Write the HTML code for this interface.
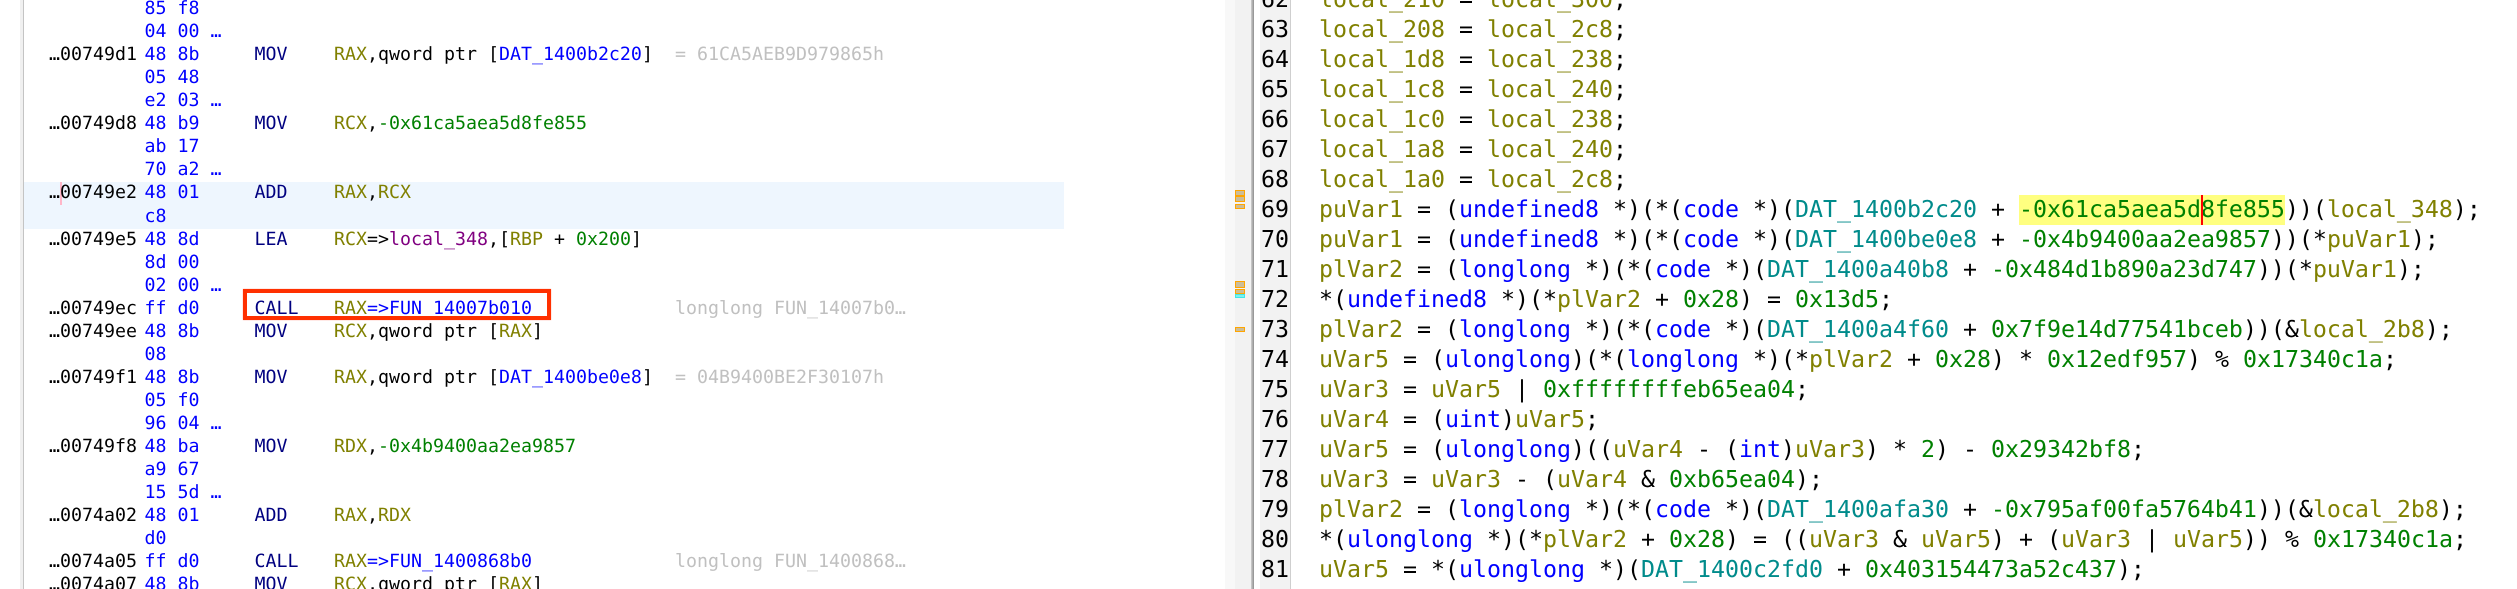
<!DOCTYPE html>
<html><head><meta charset="utf-8">
<style>
html,body{margin:0;padding:0;background:#fff}
#p{position:relative;width:2517px;height:589px;overflow:hidden;background:#fff;font-family:"DejaVu Sans Mono","Liberation Mono",monospace;text-rendering:geometricPrecision}
.abs{position:absolute}
#L{position:absolute;left:0;top:0;width:1225px;height:589px;font-size:18.27px;line-height:23px;filter:blur(.3px)}
#L div{position:absolute;left:0;width:1200px;height:23px}
#L span{white-space:pre}
#L div>span{position:absolute;top:0}
.a{left:49px;color:#000}
.b{left:144.5px;color:#00f}
.m{left:254.5px;color:#000080}
.o{left:334px;color:#000}
.g{left:675px;color:#c0c0c0}
#R{position:absolute;left:0;top:0;width:2517px;height:589px;font-size:23.25px;line-height:30px;filter:blur(.3px)}
#R div{position:absolute;height:30px;white-space:pre}
#R .n{left:1261px;color:#000}
#R .c{left:1319px;color:#000}
i{font-style:normal}
.r{color:#808000}.k{color:#00f}.h{color:#008000}.p{color:#800080}.t{color:#008b8b}
.mk{position:absolute;left:1235px;width:10px;box-sizing:border-box;border:1px solid #ffa500;background:#cdbd98}
</style></head><body><div id="p">

<div class="abs" style="left:20px;top:0;width:3px;height:589px;background:#f0f0f0"></div>
<div class="abs" style="left:23px;top:0;width:1px;height:589px;background:#c4c4c4"></div>
<div class="abs" style="left:24px;top:182px;width:1040px;height:47px;background:#eef6fe"></div>
<div class="abs" style="left:60px;top:182px;width:2px;height:23px;background:#ffb6c8"></div>

<div id="L">
<div style="top:-2.8px"><span class="b">85 f8</span></div>
<div style="top:20.2px"><span class="b">04 00 …</span></div>
<div style="top:43.3px"><span class="a">…00749d1</span><span class="b">48 8b</span><span class="m">MOV</span><span class="o"><i class="r">RAX</i>,qword ptr [<i class="k">DAT_1400b2c20</i>]</span><span class="g">= 61CA5AEB9D979865h</span></div>
<div style="top:66.3px"><span class="b">05 48</span></div>
<div style="top:89.3px"><span class="b">e2 03 …</span></div>
<div style="top:112.4px"><span class="a">…00749d8</span><span class="b">48 b9</span><span class="m">MOV</span><span class="o"><i class="r">RCX</i>,<i class="h">-0x61ca5aea5d8fe855</i></span></div>
<div style="top:135.4px"><span class="b">ab 17</span></div>
<div style="top:158.4px"><span class="b">70 a2 …</span></div>
<div style="top:181.4px"><span class="a">…00749e2</span><span class="b">48 01</span><span class="m">ADD</span><span class="o"><i class="r">RAX</i>,<i class="r">RCX</i></span></div>
<div style="top:204.5px"><span class="b">c8</span></div>
<div style="top:227.5px"><span class="a">…00749e5</span><span class="b">48 8d</span><span class="m">LEA</span><span class="o"><i class="r">RCX</i>=&gt;<i class="p">local_348</i>,[<i class="r">RBP</i> + <i class="h">0x200</i>]</span></div>
<div style="top:250.5px"><span class="b">8d 00</span></div>
<div style="top:273.6px"><span class="b">02 00 …</span></div>
<div style="top:296.6px"><span class="a">…00749ec</span><span class="b">ff d0</span><span class="m">CALL</span><span class="o"><i class="r">RAX</i><i class="k">=&gt;FUN_14007b010</i></span><span class="g">longlong FUN_14007b0…</span></div>
<div style="top:319.6px"><span class="a">…00749ee</span><span class="b">48 8b</span><span class="m">MOV</span><span class="o"><i class="r">RCX</i>,qword ptr [<i class="r">RAX</i>]</span></div>
<div style="top:342.7px"><span class="b">08</span></div>
<div style="top:365.7px"><span class="a">…00749f1</span><span class="b">48 8b</span><span class="m">MOV</span><span class="o"><i class="r">RAX</i>,qword ptr [<i class="k">DAT_1400be0e8</i>]</span><span class="g">= 04B9400BE2F30107h</span></div>
<div style="top:388.7px"><span class="b">05 f0</span></div>
<div style="top:411.7px"><span class="b">96 04 …</span></div>
<div style="top:434.8px"><span class="a">…00749f8</span><span class="b">48 ba</span><span class="m">MOV</span><span class="o"><i class="r">RDX</i>,<i class="h">-0x4b9400aa2ea9857</i></span></div>
<div style="top:457.8px"><span class="b">a9 67</span></div>
<div style="top:480.8px"><span class="b">15 5d …</span></div>
<div style="top:503.9px"><span class="a">…0074a02</span><span class="b">48 01</span><span class="m">ADD</span><span class="o"><i class="r">RAX</i>,<i class="r">RDX</i></span></div>
<div style="top:526.9px"><span class="b">d0</span></div>
<div style="top:549.9px"><span class="a">…0074a05</span><span class="b">ff d0</span><span class="m">CALL</span><span class="o"><i class="r">RAX</i><i class="k">=&gt;FUN_1400868b0</i></span><span class="g">longlong FUN_1400868…</span></div>
<div style="top:573px"><span class="a">…0074a07</span><span class="b">48 8b</span><span class="m">MOV</span><span class="o"><i class="r">RCX</i>,qword ptr [<i class="r">RAX</i>]</span></div>
</div>

<div class="abs" style="left:243px;top:289px;width:308px;height:31px;box-sizing:border-box;border:4px solid #ff3000;box-shadow:0 0 1px #ff9080"></div>

<!-- right gutter -->
<div class="abs" style="left:1225px;top:0;width:10px;height:589px;background:#f8f8f8"></div>
<div class="abs" style="left:1235px;top:0;width:16px;height:589px;background:#f2f2f2"></div>
<div class="abs" style="left:1251px;top:0;width:3px;height:589px;background:linear-gradient(90deg,#d0d0d0,#8e8e8e)"></div>
<div class="abs" style="left:1260px;top:0;width:30px;height:589px;background:#f2f2f2"></div>
<div class="abs" style="left:1290px;top:0;width:1px;height:589px;background:#cfcfcf"></div>
<div class="mk" style="top:190px;height:6px"></div>
<div class="mk" style="top:196px;height:6px"></div>
<div class="mk" style="top:204px;height:5px"></div>
<div class="mk" style="top:281px;height:7px"></div>
<div class="mk" style="top:289px;height:5px"></div>
<div class="mk" style="top:294px;height:4px;background:#80f0f0;border-color:#40e8e8"></div>
<div class="mk" style="top:327px;height:5px"></div>

<div class="abs" style="left:2019px;top:195px;width:266px;height:30px;background:#ffff80"></div>

<div id="R">
<div class="n" style="top:-15.5px">62</div><div class="c" style="top:-15.5px"><i class="r">local_210</i> = <i class="r">local_300</i>;</div>
<div class="n" style="top:14.5px">63</div><div class="c" style="top:14.5px"><i class="r">local_208</i> = <i class="r">local_2c8</i>;</div>
<div class="n" style="top:44.5px">64</div><div class="c" style="top:44.5px"><i class="r">local_1d8</i> = <i class="r">local_238</i>;</div>
<div class="n" style="top:74.5px">65</div><div class="c" style="top:74.5px"><i class="r">local_1c8</i> = <i class="r">local_240</i>;</div>
<div class="n" style="top:104.5px">66</div><div class="c" style="top:104.5px"><i class="r">local_1c0</i> = <i class="r">local_238</i>;</div>
<div class="n" style="top:134.5px">67</div><div class="c" style="top:134.5px"><i class="r">local_1a8</i> = <i class="r">local_240</i>;</div>
<div class="n" style="top:164.5px">68</div><div class="c" style="top:164.5px"><i class="r">local_1a0</i> = <i class="r">local_2c8</i>;</div>
<div class="n" style="top:194.5px">69</div><div class="c" style="top:194.5px"><i class="r">puVar1</i> = (<i class="k">undefined8</i> *)(*(<i class="k">code</i> *)(<i class="t">DAT_1400b2c20</i> + <i class="h">-0x61ca5aea5d8fe855</i>))(<i class="r">local_348</i>);</div>
<div class="n" style="top:224.5px">70</div><div class="c" style="top:224.5px"><i class="r">puVar1</i> = (<i class="k">undefined8</i> *)(*(<i class="k">code</i> *)(<i class="t">DAT_1400be0e8</i> + <i class="h">-0x4b9400aa2ea9857</i>))(*<i class="r">puVar1</i>);</div>
<div class="n" style="top:254.5px">71</div><div class="c" style="top:254.5px"><i class="r">plVar2</i> = (<i class="k">longlong</i> *)(*(<i class="k">code</i> *)(<i class="t">DAT_1400a40b8</i> + <i class="h">-0x484d1b890a23d747</i>))(*<i class="r">puVar1</i>);</div>
<div class="n" style="top:284.5px">72</div><div class="c" style="top:284.5px">*(<i class="k">undefined8</i> *)(*<i class="r">plVar2</i> + <i class="h">0x28</i>) = <i class="h">0x13d5</i>;</div>
<div class="n" style="top:314.5px">73</div><div class="c" style="top:314.5px"><i class="r">plVar2</i> = (<i class="k">longlong</i> *)(*(<i class="k">code</i> *)(<i class="t">DAT_1400a4f60</i> + <i class="h">0x7f9e14d77541bceb</i>))(&amp;<i class="r">local_2b8</i>);</div>
<div class="n" style="top:344.5px">74</div><div class="c" style="top:344.5px"><i class="r">uVar5</i> = (<i class="k">ulonglong</i>)(*(<i class="k">longlong</i> *)(*<i class="r">plVar2</i> + <i class="h">0x28</i>) * <i class="h">0x12edf957</i>) % <i class="h">0x17340c1a</i>;</div>
<div class="n" style="top:374.5px">75</div><div class="c" style="top:374.5px"><i class="r">uVar3</i> = <i class="r">uVar5</i> | <i class="h">0xffffffffeb65ea04</i>;</div>
<div class="n" style="top:404.5px">76</div><div class="c" style="top:404.5px"><i class="r">uVar4</i> = (<i class="k">uint</i>)<i class="r">uVar5</i>;</div>
<div class="n" style="top:434.5px">77</div><div class="c" style="top:434.5px"><i class="r">uVar5</i> = (<i class="k">ulonglong</i>)((<i class="r">uVar4</i> - (<i class="k">int</i>)<i class="r">uVar3</i>) * <i class="h">2</i>) - <i class="h">0x29342bf8</i>;</div>
<div class="n" style="top:464.5px">78</div><div class="c" style="top:464.5px"><i class="r">uVar3</i> = <i class="r">uVar3</i> - (<i class="r">uVar4</i> &amp; <i class="h">0xb65ea04</i>);</div>
<div class="n" style="top:494.5px">79</div><div class="c" style="top:494.5px"><i class="r">plVar2</i> = (<i class="k">longlong</i> *)(*(<i class="k">code</i> *)(<i class="t">DAT_1400afa30</i> + <i class="h">-0x795af00fa5764b41</i>))(&amp;<i class="r">local_2b8</i>);</div>
<div class="n" style="top:524.5px">80</div><div class="c" style="top:524.5px">*(<i class="k">ulonglong</i> *)(*<i class="r">plVar2</i> + <i class="h">0x28</i>) = ((<i class="r">uVar3</i> &amp; <i class="r">uVar5</i>) + (<i class="r">uVar3</i> | <i class="r">uVar5</i>)) % <i class="h">0x17340c1a</i>;</div>
<div class="n" style="top:554.5px">81</div><div class="c" style="top:554.5px"><i class="r">uVar5</i> = *(<i class="k">ulonglong</i> *)(<i class="t">DAT_1400c2fd0</i> + <i class="h">0x403154473a52c437</i>);</div>
</div>

<div class="abs" style="left:2201px;top:195px;width:2px;height:30px;background:#ff0000"></div>
</div></body></html>
